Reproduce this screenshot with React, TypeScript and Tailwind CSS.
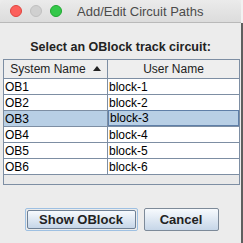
import React from 'react';

const rows = [
  { sys: 'OB1', user: 'block-1' },
  { sys: 'OB2', user: 'block-2' },
  { sys: 'OB3', user: 'block-3' },
  { sys: 'OB4', user: 'block-4' },
  { sys: 'OB5', user: 'block-5' },
  { sys: 'OB6', user: 'block-6' },
];

const font = { fontFamily: '"Liberation Sans", Arial, sans-serif' };

const App: React.FC = () => {
  const selected = 2;

  return (
    <div className="w-[243px] h-[243px] flex overflow-hidden bg-[#ececec]" style={font}>
      <div className="w-[241px] h-full bg-[#ececec] flex flex-col rounded-t-[5px]">
        {/* title bar */}
        <div className="h-[23px] flex items-center rounded-t-[5px] border-b border-[#b9b9b9] bg-gradient-to-b from-[#ebebeb] to-[#dcdcdc] shrink-0">
          <div className="flex items-center gap-[8px] pl-[10px]">
            <span className="w-[12px] h-[12px] rounded-full bg-[#fc605c] border border-[#e0443e]" />
            <span className="w-[12px] h-[12px] rounded-full bg-[#d0d0d0] border border-[#c0c0c0]" />
            <span className="w-[12px] h-[12px] rounded-full bg-[#34c84a] border border-[#1fa830]" />
          </div>
          <span className="ml-[15px] text-[13px] text-[#4b4b4b] leading-none">Add/Edit Circuit Paths</span>
        </div>

        <div className="h-[36px] flex items-end justify-center pb-[6px] shrink-0">
          <span className="text-[12.5px] font-bold text-[#222] leading-none">Select an OBlock track circuit:</span>
        </div>

        {/* table */}
        <div className="ml-[3px] w-[237px] border border-[#7d8ea3] bg-[#e9e9e9] flex flex-col text-[12px] text-black">
          <div className="h-[19px] flex border-b border-[#7d8ea3] bg-[#eeeeee]">
            <div className="w-[104px] border-r border-[#7d8ea3] flex items-center justify-center gap-[7px] text-[#222]">
              <span>System Name</span>
              <svg width="8" height="5" viewBox="0 0 8 5" className="mt-[-1px]">
                <path d="M0 5 L4 0 L8 5 Z" fill="#222" />
              </svg>
            </div>
            <div className="flex-1 flex items-center justify-center text-[#222]">User Name</div>
          </div>
          {rows.map((r, i) => (
            <div
              key={r.sys}
              className={`h-[16px] flex border-b border-[#7d8ea3] ${i === selected ? 'bg-[#b8cfe5]' : 'bg-white'}`}
            >
              <div className="w-[104px] border-r border-[#7d8ea3] flex items-center pl-[1px] leading-none">{r.sys}</div>
              <div
                className={`flex-1 flex items-center pl-[1px] leading-none ${i === selected ? 'border border-[#5f7fa8] -mt-px' : ''}`}
              >
                {r.user}
              </div>
            </div>
          ))}
          <div className="h-[9px]" />
        </div>

        {/* buttons */}
        <div className="flex justify-center gap-[6px] mt-[23px] pl-[2px]">
          <div className="w-[113px] h-[23px] rounded-[2px] border border-[#9ec0e2] p-px flex">
            <button className="flex-1 border border-[#6f8196] rounded-[2px] bg-gradient-to-b from-[#f7fafd] to-[#c6d6e8] text-[13px] font-bold text-[#222] leading-none">
              Show OBlock
            </button>
          </div>
          <button className="w-[75px] h-[23px] border border-[#7d8a99] rounded-[2px] bg-gradient-to-b from-[#f7fafd] to-[#c6d6e8] text-[13px] font-bold text-[#222] leading-none">
            Cancel
          </button>
        </div>
      </div>
      <div className="w-[2px] flex flex-col">
        <div className="h-[23px] bg-[#f2f2f2]" />
        <div className="flex-1 bg-[#5f5f5f]" />
      </div>
    </div>
  );
};

export default App;
